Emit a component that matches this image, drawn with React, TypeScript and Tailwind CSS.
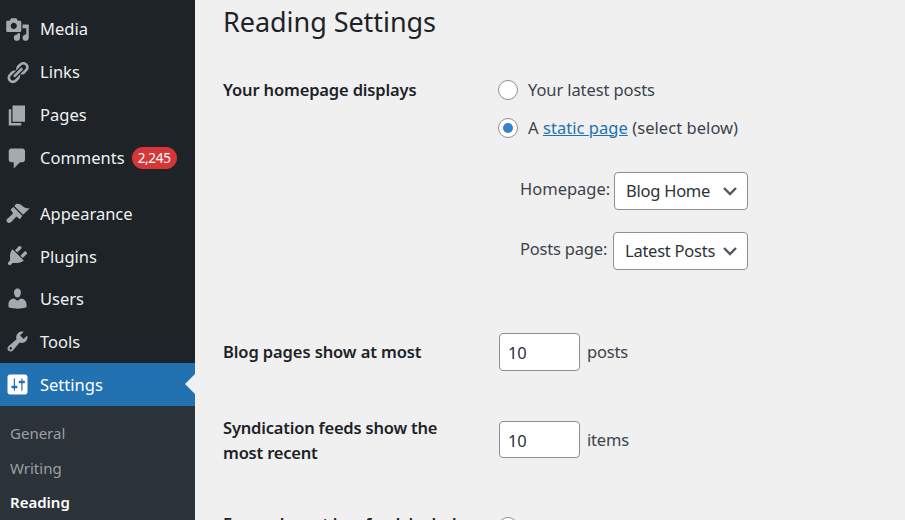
const font = { fontFamily: '"Noto Sans", sans-serif' };

const menuTop = [
  { label: "Media", d: "M13 11V4c0-.55-.45-1-1-1h-1.67L9 1H5L3.67 3H2c-.55 0-1 .45-1 1v7c0 .55.45 1 1 1h10c.55 0 1-.45 1-1zM7 4.5c1.38 0 2.5 1.12 2.5 2.5S8.38 9.5 7 9.5 4.5 8.38 4.5 7 5.62 4.5 7 4.5zM14 6h5v10.5c0 1.38-1.12 2.5-2.5 2.5S14 17.88 14 16.5s1.12-2.5 2.5-2.5c.17 0 .34.02.5.05V9h-3V6zm-4 8.05V13h2v3.5c0 1.38-1.12 2.5-2.5 2.5S7 17.88 7 16.5 8.12 14 9.5 14c.17 0 .34.02.5.05z", up: true },
  { label: "Links", d: "M17.74 2.76c1.68 1.69 1.68 4.41 0 6.1l-1.53 1.52c-1.12 1.12-2.7 1.47-4.14 1.09l2.62-2.61.76-.77.76-.76c.84-.84.84-2.2 0-3.04-.84-.85-2.2-.85-3.04 0l-.77.76-3.38 3.38c-.37-1.44-.02-3.02 1.1-4.14l1.52-1.53c1.69-1.68 4.42-1.68 6.1 0zM8.59 13.43l5.34-5.34c.42-.42.42-1.1 0-1.52-.44-.43-1.13-.39-1.53 0l-5.33 5.34c-.42.42-.42 1.1 0 1.52.44.43 1.13.39 1.52 0zm-.76 2.29l4.14-4.15c.38 1.44.03 3.02-1.09 4.14l-1.52 1.53c-1.69 1.68-4.41 1.68-6.1 0-1.68-1.68-1.68-4.42 0-6.1l1.53-1.52c1.12-1.12 2.7-1.47 4.14-1.1l-4.14 4.15c-.85.84-.85 2.2 0 3.05.84.84 2.2.84 3.04 0z" },
  { label: "Pages", d: "M6 15V2h10v13H6zm-1 1h8v2H3V5h2v11z" },
  { label: "Comments", d: "M5 2h9c1.1 0 2 .9 2 2v7c0 1.1-.9 2-2 2h-2l-5 5v-5H5c-1.1 0-2-.9-2-2V4c0-1.1.9-2 2-2z", badge: "2,245" },
];

const menuBottom = [
  { label: "Appearance", d: "M14.48 11.06L7.41 3.99l1.5-1.5c.5-.56 2.3-.47 3.51.32 1.21.8 1.43 1.28 2.91 2.1 1.18.64 2.45 1.26 4.45.85zM13.77 11.77L6.7 4.7 4.93 6.47c-.39.39-.39 1.02 0 1.41l1.06 1.06c.39.39.39 1.03 0 1.42-.6.6-3.55 3.3-4.14 3.9-.78.78-.78 2.05 0 2.83.78.78 2.05.78 2.83 0 .6-.6 3.31-3.54 3.9-4.14.39-.39 1.03-.39 1.42 0l1.06 1.06c.39.39 1.02.39 1.41 0z" },
  { label: "Plugins", d: "M13.11 4.36L9.87 7.6 8 5.73l3.24-3.24c.35-.34 1.05-.2 1.56.32.52.51.66 1.21.31 1.55zm-8 1.77l.91-1.12 9.01 9.01-1.19.84c-.71.71-2.63 1.16-3.82 1.16H6.14L4.9 17.26c-.59.59-1.54.59-2.12 0-.59-.58-.59-1.53 0-2.12l1.24-1.24v-3.88c0-1.13.4-3.19 1.09-3.89zm7.26 3.97l3.24-3.24c.34-.35 1.04-.21 1.55.31.52.51.66 1.21.31 1.55l-3.24 3.25z" },
  { label: "Users", d: "M10 9.25c-2.27 0-2.73-3.44-2.73-3.44C7 4.02 7.82 2 9.97 2c2.16 0 2.98 2.02 2.71 3.81 0 0-.41 3.44-2.68 3.44zm0 2.57L12.72 10c2.39 0 4.52 2.33 4.52 4.53v2.49s-3.65 1.13-7.24 1.13c-3.65 0-7.24-1.13-7.24-1.13v-2.49c0-2.25 1.94-4.48 4.47-4.48z" },
  { label: "Tools", d: "M16.68 9.77c-1.34 1.34-3.3 1.67-4.95.99l-5.41 6.52c-.99.99-2.59.99-3.58 0s-.99-2.59 0-3.57l6.52-5.42c-.68-1.65-.35-3.61.99-4.95 1.28-1.28 3.12-1.62 4.72-1.06l-2.89 2.89 2.82 2.82 2.86-2.87c.53 1.58.18 3.39-1.08 4.67zM3.81 16.21c.4.39 1.04.39 1.43 0 .4-.4.4-1.04 0-1.43-.39-.4-1.03-.4-1.43 0-.39.39-.39 1.03 0 1.43z" },
];

const settingsIcon = "M18 16V4c0-1.1-.9-2-2-2H4c-1.1 0-2 .9-2 2v12c0 1.1.9 2 2 2h12c1.1 0 2-.9 2-2zM8 11h1c.55 0 1 .45 1 1s-.45 1-1 1H8v1.5c0 .28-.22.5-.5.5s-.5-.22-.5-.5V13H6c-.55 0-1-.45-1-1s.45-1 1-1h1V5.5c0-.28.22-.5.5-.5s.5.22.5.5V11zm5-2h-1c-.55 0-1-.45-1-1s.45-1 1-1h1V5.5c0-.28.22-.5.5-.5s.5.22.5.5V7h1c.55 0 1 .45 1 1s-.45 1-1 1h-1v5.5c0 .28-.22.5-.5.5s-.5-.22-.5-.5V9z";

const Icon = ({ d, className }: { d: string; className: string }) => (
  <svg viewBox="0 0 20 20" className={`h-[25px] w-[25px] shrink-0 fill-current ${className}`}>
    <path d={d} />
  </svg>
);

type RowProps = { label: string; d: string; badge?: string; low?: boolean; up?: boolean };

const MenuRow = ({ label, d, badge, low, up }: RowProps) => (
  <div className="flex h-[42.8px] items-center pl-[5px] text-[16.5px] text-[#f0f0f1]">
    <Icon d={d} className="text-[#a7aaad]" />
    <span className={low ? "ml-[10px] pt-[2px]" : up ? "ml-[10px] pb-[2px]" : "ml-[10px]"}>{label}</span>
    {badge && (
      <span className="ml-[7px] flex h-[22px] w-[45px] items-center justify-center rounded-full bg-[#d63638] text-[13.5px] tracking-[-0.3px] text-white">
        {badge}
      </span>
    )}
  </div>
);

const Radio = ({ checked }: { checked?: boolean }) => (
  <span className="flex h-[20px] w-[20px] shrink-0 items-center justify-center rounded-full border border-[#8c8f94] bg-white">
    {checked && <span className="h-[10px] w-[10px] rounded-full bg-[#3582c4]" />}
  </span>
);

const Select = ({ value, className }: { value: string; className: string }) => (
  <div className={`flex h-[37.5px] items-center justify-between rounded-[4px] border border-[#8c8f94] bg-white pl-[11px] pr-[9px] text-[16.5px] tracking-[-0.25px] text-[#2c3338] ${className}`}>
    <span>{value}</span>
    <svg viewBox="0 0 16 16" className="h-[16px] w-[16px] text-[#50575e]" fill="none" stroke="currentColor" strokeWidth="2.4">
      <path d="M2 5 8 11 14 5" />
    </svg>
  </div>
);

const NumberField = ({ suffix }: { suffix: string }) => (
  <div className="flex items-center">
    <input
      readOnly
      value="10"
      className="ml-px h-[37.5px] w-[81px] rounded-[4px] border border-[#8c8f94] bg-white px-[8px] pt-[1px] text-[16.5px] text-[#2c3338] outline-none"
    />
    <span className="ml-[7px] pt-[2px] text-[16.5px] tracking-[-0.2px] text-[#3c434a]">{suffix}</span>
  </div>
);

export default function App() {
  return (
    <div className="flex h-[520px] w-[905px] overflow-hidden bg-[#f0f0f1]" style={font}>
      <aside className="h-full w-[195px] shrink-0 bg-[#1d2327] pt-[8.6px]">
        {menuTop.map((m) => (
          <MenuRow key={m.label} {...m} />
        ))}
        <div className="h-[12px]" />
        {menuBottom.map((m) => (
          <MenuRow key={m.label} {...m} low />
        ))}
        <div className="relative flex h-[42.8px] items-center bg-[#2271b1] pl-[5px] text-[16.5px] text-white">
          <Icon d={settingsIcon} className="text-white" />
          <span className="ml-[10px] pt-[2px]">Settings</span>
          <span className="absolute right-0 top-1/2 h-0 w-0 -translate-y-1/2 border-y-[10px] border-r-[10px] border-y-transparent border-r-[#f0f0f1]" />
        </div>
        <div className="flex h-[114px] flex-col bg-[#2c3338] pl-[10px] pt-[10px] text-[15px] text-[#c3c4c7]/75">
          <div className="flex h-[35px] items-center">General</div>
          <div className="flex h-[35px] items-center">Writing</div>
          <div className="flex h-[35px] items-center font-semibold text-white">Reading</div>
        </div>
      </aside>

      <main className="min-w-0 flex-1 pl-[28px] text-[16.5px] tracking-[-0.2px] text-[#3c434a]">
        <h1 className="pt-[2px] text-[27px] leading-[40px] tracking-[-0.05px] text-[#1d2327]">Reading Settings</h1>

        <div className="mt-[34px] flex">
          <div className="w-[275px] shrink-0 pt-[1px] font-semibold leading-[26px] tracking-[-0.15px] text-[#1d2327]">Your homepage displays</div>
          <div>
            <div className="flex h-[28px] items-center gap-[10px] tracking-[-0.1px]">
              <Radio />
              <span>Your latest posts</span>
            </div>
            <div className="mt-[10px] flex h-[28px] items-center gap-[10px] tracking-[0.05px]">
              <Radio checked />
              <span>
                A <span className="text-[#2271b1] underline">static page</span> (select below)
              </span>
            </div>
            <div className="ml-[22px] mt-[30px] flex h-[38px] items-center gap-[5px] tracking-[0px]">
              <span className="w-[89px] pb-[4px]">Homepage:</span>
              <Select value="Blog Home" className="w-[134px]" />
            </div>
            <div className="ml-[22px] mt-[22px] flex h-[38px] items-center gap-[5px]">
              <span className="w-[88px] pb-[4px]">Posts page:</span>
              <Select value="Latest Posts" className="w-[135px]" />
            </div>
          </div>
        </div>

        <div className="mt-[63px] flex items-center">
          <div className="w-[275px] shrink-0 pt-[2px] font-semibold tracking-[-0.1px] text-[#1d2327]">Blog pages show at most</div>
          <NumberField suffix="posts" />
        </div>

        <div className="mt-[44px] flex items-center">
          <div className="w-[275px] shrink-0 pr-[30px] font-semibold leading-[25px] text-[#1d2327]">Syndication feeds show the most recent</div>
          <NumberField suffix="items" />
        </div>

        <div className="mt-[46px] flex items-start">
          <div className="w-[275px] shrink-0 whitespace-nowrap font-semibold leading-[26px] text-[#1d2327]">For each post in a feed, include</div>
          <div className="mt-[3px] flex h-[26px] items-start gap-[10px]">
            <span className="pt-[3px]">
              <Radio />
            </span>
            <span className="leading-[26px]">Full</span>
          </div>
        </div>
      </main>
    </div>
  );
}
